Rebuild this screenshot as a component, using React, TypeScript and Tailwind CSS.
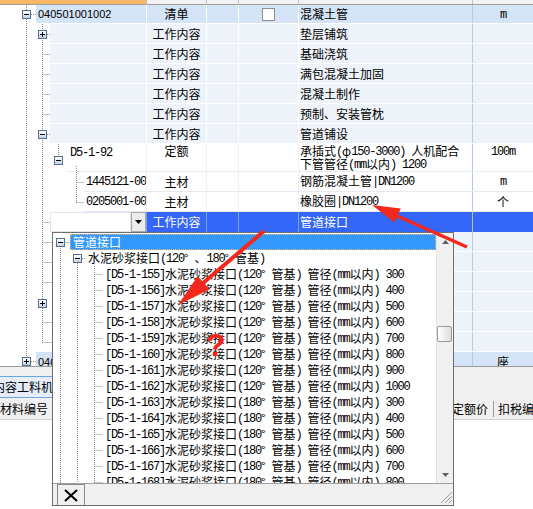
import React from "react";

function Mix({ s }: { s: string }) {
  const parts = s.match(/[\x20-\x7e]+|[^\x20-\x7e]+/g) ?? [];
  return (
    <span className="whitespace-pre">
      {parts.map((p, i) =>
        /^[\x20-\x7e]+$/.test(p) ? (
          <span key={i} className="align-[1px] font-['Liberation_Mono'] text-[12px] tracking-[-1.2px]">
            {p}
          </span>
        ) : (
          <span key={i}>{p}</span>
        )
      )}
    </span>
  );
}

type RP = {
  h: string;
  ind: string;
  c1w: string;
  bg: string;
  sep: string;
  bb: string;
  al: string;
  c1?: React.ReactNode;
  c2?: React.ReactNode;
  c4?: React.ReactNode;
  c5?: React.ReactNode;
  c6?: React.ReactNode;
};

function Row(p: RP) {
  return (
    <div className={`flex shrink-0 ${p.h}`}>
      <div className={`shrink-0 ${p.ind}`} />
      <div className={`flex flex-1 border-b ${p.bb} ${p.bg}`}>
        <div className={`flex shrink-0 overflow-hidden whitespace-nowrap pl-[2px] ${p.al} ${p.c1w}`}>{p.c1}</div>
        <div className={`flex w-[60px] shrink-0 justify-center border-l ${p.sep} ${p.al}`}>{p.c2}</div>
        <div className={`w-[32px] shrink-0 border-l ${p.sep}`} />
        <div className={`flex w-[60px] shrink-0 justify-center border-l ${p.sep} ${p.al}`}>{p.c4}</div>
        <div className={`flex w-[174px] shrink-0 overflow-hidden whitespace-nowrap border-l pl-[1px] ${p.sep} ${p.al}`}>
          {p.c5}
        </div>
        <div className={`flex w-[61px] shrink-0 justify-center border-l border-[#b3cbe9] ${p.al}`}>{p.c6}</div>
      </div>
    </div>
  );
}

function TBox({ x, y, plus, g }: { x: number; y: number; plus?: boolean; g: string }) {
  return (
    <g>
      <rect x={x + 0.5} y={y + 0.5} width={8} height={8} fill={`url(#${g})`} stroke="#566d8f" />
      <line x1={x + 2} y1={y + 4.5} x2={x + 7} y2={y + 4.5} stroke="#000" />
      {plus && <line x1={x + 4.5} y1={y + 2} x2={x + 4.5} y2={y + 7} stroke="#000" />}
    </g>
  );
}

const DOT = { stroke: "#8a8a8a", strokeDasharray: "1 1", strokeWidth: 1 } as const;

function MainTree() {
  const hs = [54.5, 74.5, 94.5, 114.5];
  const low = [242.5, 262.5, 282.5, 322.5, 342.5];
  return (
    <svg className="pointer-events-none absolute left-0 top-0" width={146} height={367}>
      <defs>
        <linearGradient id="tbg" x1="0" y1="0" x2="0" y2="1">
          <stop offset="0" stopColor="#ffffff" />
          <stop offset="1" stopColor="#c3cfe0" />
        </linearGradient>
      </defs>
      <line x1={26.5} y1={5} x2={26.5} y2={357} {...DOT} />
      <line x1={31} y1={14.5} x2={36} y2={14.5} {...DOT} />
      <line x1={42.5} y1={24} x2={42.5} y2={343} {...DOT} />
      <line x1={47} y1={34.5} x2={50} y2={34.5} {...DOT} />
      {hs.map((y) => (
        <line key={y} x1={42.5} y1={y} x2={50} y2={y} {...DOT} />
      ))}
      <line x1={47} y1={134.5} x2={50} y2={134.5} {...DOT} />
      <line x1={58.5} y1={144} x2={58.5} y2={156} {...DOT} />
      <line x1={76.5} y1={166} x2={76.5} y2={203} {...DOT} />
      <line x1={76.5} y1={182.5} x2={84} y2={182.5} {...DOT} />
      <line x1={76.5} y1={202.5} x2={84} y2={202.5} {...DOT} />
      <line x1={42.5} y1={222.5} x2={50} y2={222.5} {...DOT} />
      {low.map((y) => (
        <line key={y} x1={42.5} y1={y} x2={52} y2={y} {...DOT} />
      ))}
      <line x1={31} y1={361.5} x2={36} y2={361.5} {...DOT} />
      <TBox x={22} y={10} g="tbg" />
      <TBox x={38} y={30} plus g="tbg" />
      <TBox x={38} y={130} g="tbg" />
      <TBox x={54} y={156} g="tbg" />
      <TBox x={38} y={299} plus g="tbg" />
      <TBox x={22} y={357} plus g="tbg" />
    </svg>
  );
}

const LIGHT = "bg-[#eef3f9]";

function Grid() {
  const work = ["垫层铺筑", "基础浇筑", "满包混凝土加固", "混凝土制作", "预制、安装管枕", "管道铺设"];
  return (
    <div className="flex h-[362px] shrink-0 flex-col overflow-hidden border-b border-[#9a9a9a]">
      <Row
        h="h-[19px]"
        ind="w-[36px]"
        c1w="w-[110px]"
        bg="bg-[#d4e3f5]"
        sep="border-white"
        bb="border-white"
        al="items-center"
        c1={<span className="font-['Liberation_Sans'] text-[11px]">040501001002</span>}
        c2="清单"
        c4={<div className="h-[13px] w-[13px] border border-[#8e8e8e] bg-white" />}
        c5="混凝土管"
        c6={<Mix s="m" />}
      />
      {work.map((w) => (
        <Row
          key={w}
          h="h-[20px]"
          ind="w-[50px]"
          c1w="w-[96px]"
          bg={LIGHT}
          sep="border-white"
          bb="border-white"
          al="items-center"
          c2="工作内容"
          c5={<Mix s={w} />}
        />
      ))}
      <Row
        h="h-[28px]"
        ind="w-[67px]"
        c1w="w-[79px]"
        bg="bg-white"
        sep="border-[#edf1f6]"
        bb="border-[#e6ebf2]"
        al="items-start pt-[1px] leading-[12px]"
        c1={
          <span className="ml-[1px] mt-[1px]">
            <Mix s="D5-1-92" />
          </span>
        }
        c2="定额"
        c5={
          <div>
            <div className="h-[13px]">
              <Mix s="承插式(φ150-3000) 人机配合" />
            </div>
            <div className="h-[12px]">
              <Mix s="下管管径(mm以内) 1200" />
            </div>
          </div>
        }
        c6={<Mix s="100m" />}
      />
      <Row
        h="h-[20px]"
        ind="w-[84px]"
        c1w="w-[62px]"
        bg="bg-white"
        sep="border-[#edf1f6]"
        bb="border-[#e6ebf2]"
        al="items-center"
        c1={<Mix s="1445121-00" />}
        c2="主材"
        c5={<Mix s="钢筋混凝土管|DN1200" />}
        c6={<Mix s="m" />}
      />
      <Row
        h="h-[20px]"
        ind="w-[84px]"
        c1w="w-[62px]"
        bg="bg-white"
        sep="border-[#edf1f6]"
        bb="border-[#e6ebf2]"
        al="items-center"
        c1={<Mix s="0205001-00" />}
        c2="主材"
        c5={<Mix s="橡胶圈|DN1200" />}
        c6="个"
      />
      {/* selected editing row */}
      <div className="flex h-[20px] shrink-0">
        <div className="w-[50px] shrink-0" />
        <div className="w-[81px] shrink-0 border border-[#dfe6ef] bg-white" />
        <div className="flex w-[15px] shrink-0 items-center justify-center border border-[#a8a8a8] bg-[#ececec]">
          <svg width="7" height="4">
            <polygon points="0,0 7,0 3.5,4" fill="#000" />
          </svg>
        </div>
        <div className="flex flex-1 bg-[#3467f8] text-white">
          <div className="flex w-[60px] shrink-0 items-center justify-center border-l border-[#7e9cf8]">工作内容</div>
          <div className="w-[32px] shrink-0 border-l border-[#7e9cf8]" />
          <div className="w-[60px] shrink-0 border-l border-[#7e9cf8]" />
          <div className="flex w-[174px] shrink-0 items-center border-l border-[#7e9cf8] pl-[1px]">管道接口</div>
          <div className="w-[61px] shrink-0 border-l border-[#a9c4f0]" />
        </div>
      </div>
      {[0, 1, 2, 3, 4, 5].map((i) => (
        <Row
          key={i}
          h="h-[20px]"
          ind="w-[52px]"
          c1w="w-[94px]"
          bg={LIGHT}
          sep="border-white"
          bb="border-white"
          al="items-center"
          c2="工作内容"
        />
      ))}
      <Row
        h="h-[20px]"
        ind="w-[36px]"
        c1w="w-[110px]"
        bg="bg-[#d4e3f5]"
        sep="border-white"
        bb="border-white"
        al="items-center"
        c1={<span className="font-['Liberation_Sans'] text-[11px]">040501001003</span>}
        c2="清单"
        c5="混凝土管"
        c6="座"
      />
    </div>
  );
}

function Header() {
  return (
    <div className="flex h-[5px] shrink-0 border-b border-[#a0a0a0] bg-[#f2f2f2]">
      <div className="w-[146px] shrink-0 bg-[#f7b666]" />
      <div className="w-[60px] shrink-0 border-l border-[#c4c4c4]" />
      <div className="w-[32px] shrink-0 border-l border-[#c4c4c4]" />
      <div className="w-[60px] shrink-0 border-l border-[#c4c4c4]" />
      <div className="w-[174px] shrink-0 border-l border-[#c4c4c4]" />
      <div className="w-[61px] shrink-0 border-l border-[#c4c4c4]" />
    </div>
  );
}

function Bottom() {
  return (
    <div className="flex flex-1 flex-col bg-white">
      <div className="h-[9px] shrink-0 bg-[#f0f0f0]" />
      <div className="flex h-[22px] shrink-0 bg-[#f0f0f0]">
        <div className="ml-[-7px] flex w-[90px] shrink-0 items-center whitespace-nowrap border-y border-[#6ea6e2] bg-[#e5eefa]">
          内容工料机
        </div>
      </div>
      <div className="flex h-[22px] shrink-0 items-center whitespace-nowrap border-b border-[#d0d0d0] bg-[#f0f0f0]">
        <div className="w-[452px] shrink-0">材料编号</div>
        <span className="w-[36px] shrink-0">定额价</span>
        <span className="w-[5px] shrink-0" />
        <div className="h-[16px] w-px shrink-0 bg-[#9c9c9c]" />
        <span className="w-[4px] shrink-0" />
        <span>扣税编号</span>
      </div>
      <div className="flex-1 bg-white" />
    </div>
  );
}

function PopupTree() {
  const conns = Array.from({ length: 14 }, (_, k) => 41.5 + 16 * k);
  return (
    <svg className="pointer-events-none absolute left-0 top-0" width={383} height={250}>
      <defs>
        <linearGradient id="tbg2" x1="0" y1="0" x2="0" y2="1">
          <stop offset="0" stopColor="#ffffff" />
          <stop offset="1" stopColor="#c3cfe0" />
        </linearGradient>
      </defs>
      <line x1={7.5} y1={13} x2={7.5} y2={250} {...DOT} />
      <line x1={11.5} y1={9.5} x2={17} y2={9.5} {...DOT} />
      <line x1={24.5} y1={30} x2={24.5} y2={250} {...DOT} />
      <line x1={29} y1={25.5} x2={33} y2={25.5} {...DOT} />
      <line x1={41.5} y1={33} x2={41.5} y2={250} {...DOT} />
      {conns.map((y) => (
        <line key={y} x1={41.5} y1={y} x2={50} y2={y} {...DOT} />
      ))}
      <TBox x={3} y={5} g="tbg2" />
      <TBox x={20} y={21} g="tbg2" />
    </svg>
  );
}

function Popup() {
  const items: [string, string, string][] = [
    ["155", "120", "300"],
    ["156", "120", "400"],
    ["157", "120", "500"],
    ["158", "120", "600"],
    ["159", "120", "700"],
    ["160", "120", "800"],
    ["161", "120", "900"],
    ["162", "120", "1000"],
    ["163", "180", "300"],
    ["164", "180", "400"],
    ["165", "180", "500"],
    ["166", "180", "600"],
    ["167", "180", "700"],
    ["168", "180", "800"],
  ];
  return (
    <div className="absolute left-[52px] top-[232px] flex h-[274px] w-[402px] flex-col border border-[#6f6f6f] bg-white">
      <div className="flex h-[250px] shrink-0">
        <div className="relative flex-1 overflow-hidden pt-[1px]">
          <PopupTree />
          <div className="flex h-[16px] items-center">
            <div className="w-[17px] shrink-0" />
            <div className="flex h-[16px] flex-1 items-center border border-dotted border-[#f4b46c] bg-[#3399ff] pl-[2px] text-white">
              管道接口
            </div>
          </div>
          <div className="flex h-[16px] items-center whitespace-nowrap pl-[35px]">
            <Mix s="水泥砂浆接口(120° 、180° 管基)" />
          </div>
          {items.map(([c, a, d]) => (
            <div key={c} className="flex h-[16px] items-center whitespace-nowrap pl-[52px]">
              <Mix s={`[D5-1-${c}]水泥砂浆接口(${a}° 管基) 管径(mm以内) ${d}`} />
            </div>
          ))}
        </div>
        <div className="flex w-[17px] shrink-0 flex-col border-l border-[#e2e2e2] bg-[#f0f0f0]">
          <div className="flex h-[17px] shrink-0 items-center justify-center">
            <svg width="7" height="4">
              <polygon points="3.5,0 7,4 0,4" fill="#606060" />
            </svg>
          </div>
          <div className="mt-[76px] h-[16px] w-[15px] shrink-0 rounded-[2px] border border-[#9a9a9a] bg-gradient-to-r from-white to-[#dcdcdc]" />
          <div className="flex-1" />
          <div className="flex h-[17px] shrink-0 items-center justify-center">
            <svg width="7" height="4">
              <polygon points="0,0 7,0 3.5,4" fill="#606060" />
            </svg>
          </div>
        </div>
      </div>
      <div className="flex h-[22px] shrink-0 items-end justify-between border-t border-[#a0a0a0] bg-[#f0f0f0]">
        <div className="ml-[4px] flex h-[21px] w-[28px] items-center justify-center border border-b-0 border-[#8a8a8a] bg-[#f0f0f0]">
          <svg width="14" height="13">
            <line x1="1" y1="1" x2="13" y2="12" stroke="#000" strokeWidth="2" />
            <line x1="13" y1="1" x2="1" y2="12" stroke="#000" strokeWidth="2" />
          </svg>
        </div>
        <svg width="13" height="13" className="mb-[1px]">
          <line x1="12" y1="1" x2="1" y2="12" stroke="#a0a0a0" />
          <line x1="12" y1="5" x2="5" y2="12" stroke="#a0a0a0" />
          <line x1="12" y1="9" x2="9" y2="12" stroke="#a0a0a0" />
        </svg>
      </div>
    </div>
  );
}

function Annotations() {
  const red = "#f2281c";
  return (
    <>
      <svg className="pointer-events-none absolute left-0 top-0" width={533} height={509}>
        <line x1={467} y1={247} x2={396} y2={215.5} stroke={red} strokeWidth={3.5} />
        <polygon points="372,205 394.4,222.6 400.8,208.5" fill={red} />
        <line x1={264} y1={231} x2={202} y2={284} stroke={red} strokeWidth={4} />
        <polygon points="178,305 209.5,289.5 197.7,275.9" fill={red} />
      </svg>
      <span className="pointer-events-none absolute left-[206px] top-[329px] font-['Liberation_Sans'] text-[32px] font-bold leading-none text-[#f0251c]">
        ?
      </span>
    </>
  );
}

export default function App() {
  return (
    <div className="relative flex h-[509px] w-[533px] flex-col overflow-hidden bg-white font-['Noto_Sans_CJK_SC',sans-serif] text-[12px] leading-[14px] text-black">
      <Header />
      <Grid />
      <Bottom />
      <MainTree />
      <Popup />
      <Annotations />
    </div>
  );
}
